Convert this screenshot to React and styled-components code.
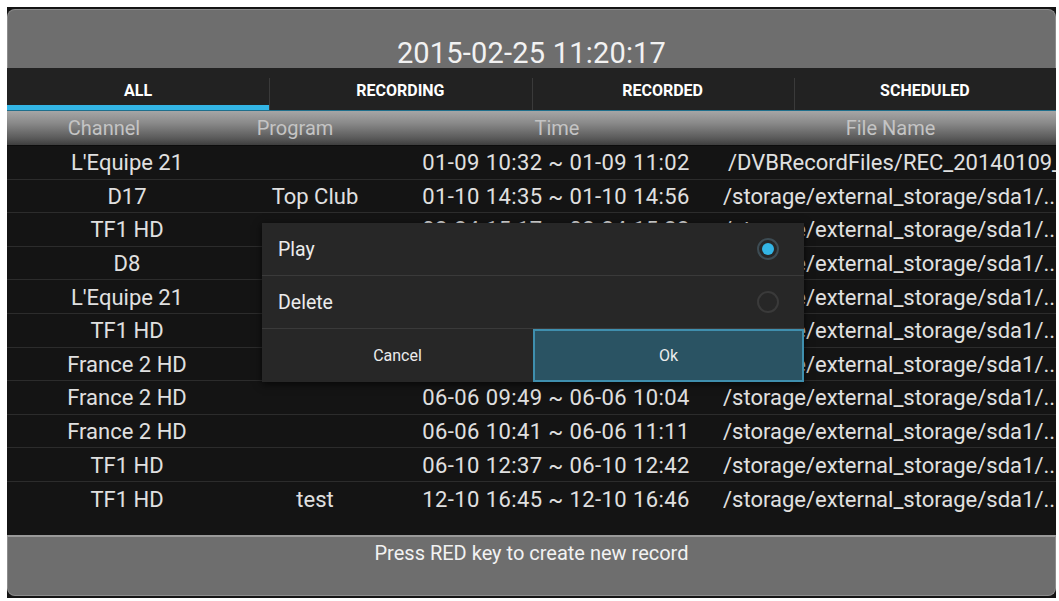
import React from "react";
import styled, { createGlobalStyle } from "styled-components";

const Global = createGlobalStyle`
  html, body { margin: 0; padding: 0; background: #ffffff; }
  body { font-family: Roboto, "Liberation Sans", Arial, sans-serif; }
  * { box-sizing: border-box; }
`;

const Screen = styled.div`
  position: relative;
  margin: 7px 0 0 7px;
  width: 1049px;
  height: 591px;
  background: #141414;
  padding-top: 2px;
  display: flex;
  flex-direction: column;
  overflow: hidden;
`;

const TopPanel = styled.div`
  height: 59px;
  flex: none;
  background: #6e6e6e;
  border: 1px solid #8c8c8c;
  border-bottom: none;
  border-radius: 8px 8px 0 0;
  padding-top: 31px;
  text-align: center;
  color: #f2f2f2;
  font-size: 29px;
  line-height: 24px;
  letter-spacing: 0.2px;
`;

const Tabs = styled.div`
  height: 43px;
  flex: none;
  background: #222222;
  display: grid;
  grid-template-columns: repeat(4, 1fr);
  border-bottom: 1px solid #1f6f8c;
`;

const Tab = styled.div`
  position: relative;
  display: flex;
  align-items: center;
  justify-content: center;
  padding-top: 3px;
  color: #ffffff;
  font-weight: 700;
  font-size: 16px;
  &::before {
    content: "";
    display: ${(p) => (p.$first ? "none" : "block")};
    position: absolute;
    left: 0;
    top: 10px;
    bottom: 0;
    width: 1px;
    background: #3a3a3a;
  }
  &::after {
    content: "";
    display: ${(p) => (p.$active ? "block" : "none")};
    position: absolute;
    left: 0;
    right: 0;
    bottom: 0;
    height: 5px;
    background: #33b5e5;
  }
`;

const HeadRow = styled.div`
  height: 35px;
  flex: none;
  display: grid;
  grid-template-columns: 194px 188px 336px 1fr;
  align-items: center;
  background: linear-gradient(#a6a6a6 0%, #8a8a8a 35%, #5a5a5a 80%, #3e3e3e 100%);
  border-bottom: 1px solid #0c0c0c;
  color: #c4c4c4;
  font-size: 20px;
`;

const HeadCell = styled.div`
  text-align: center;
  white-space: nowrap;
`;

const Rows = styled.div`
  display: flex;
  flex-direction: column;
`;

const Row = styled.div`
  height: 33.6px;
  display: grid;
  grid-template-columns: 240px 136px 340px 1fr;
  align-items: center;
  padding-top: 1px;
  border-bottom: 1px solid #2c2c2c;
  color: #e0e0e0;
  font-size: 22px;
  &:last-child { border-bottom: none; }
`;

const Cell = styled.div`
  text-align: ${(p) => (p.$left ? "left" : "center")};
  padding-left: ${(p) => p.$pl || 0}px;
  letter-spacing: ${(p) => p.$ls || 0}px;
  white-space: nowrap;
  overflow: hidden;
`;

const Spacer = styled.div`
  flex: 1;
`;

const Footer = styled.div`
  height: 61px;
  flex: none;
  background: #6e6e6e;
  border: 1px solid #8c8c8c;
  border-top: 2px solid #9a9a9a;
  border-radius: 0 0 8px 8px;
  color: #f2f2f2;
  font-size: 20px;
  text-align: center;
  padding-top: 4px;
  margin-bottom: 2px;
`;

const Dialog = styled.div`
  position: absolute;
  left: 255px;
  top: 216px;
  width: 542px;
  background: #272727;
  box-shadow: 0 2px 8px rgba(0, 0, 0, 0.7);
  display: flex;
  flex-direction: column;
`;

const Option = styled.div`
  height: 53px;
  display: flex;
  align-items: center;
  justify-content: space-between;
  padding: 0 25px 0 16px;
  border-bottom: 1px solid #3a3a3a;
  color: #ececec;
  font-size: 19.5px;
`;

const Radio = styled.span`
  width: 22px;
  height: 22px;
  border-radius: 50%;
  border: 2px solid ${(p) => (p.$on ? "#3d4c54" : "#3a3a3a")};
  display: flex;
  align-items: center;
  justify-content: center;
  &::after {
    content: "";
    width: 12px;
    height: 12px;
    border-radius: 50%;
    background: ${(p) => (p.$on ? "#33b5e5" : "transparent")};
  }
`;

const Buttons = styled.div`
  height: 53px;
  display: grid;
  grid-template-columns: 271px 1fr;
`;

const Button = styled.div`
  display: flex;
  align-items: center;
  justify-content: center;
  color: #ececec;
  font-size: 16px;
  background: ${(p) => (p.$focus ? "#2a5363" : "transparent")};
  border: ${(p) => (p.$focus ? "2px solid #3f8fae" : "none")};
`;

const tabs = ["ALL", "RECORDING", "RECORDED", "SCHEDULED"];

const data = [
  ["L'Equipe 21", "", "01-09 10:32 ~ 01-09 11:02", "/DVBRecordFiles/REC_20140109_", 5],
  ["D17", "Top Club", "01-10 14:35 ~ 01-10 14:56", "/storage/external_storage/sda1/..", 0],
  ["TF1 HD", "", "02-24 15:17 ~ 02-24 15:32", "/storage/external_storage/sda1/..", 0],
  ["D8", "", "03-05 20:50 ~ 03-05 21:20", "/storage/external_storage/sda1/..", 0],
  ["L'Equipe 21", "", "04-12 18:00 ~ 04-12 18:30", "/storage/external_storage/sda1/..", 0],
  ["TF1 HD", "", "05-20 13:00 ~ 05-20 13:45", "/storage/external_storage/sda1/..", 0],
  ["France 2 HD", "", "06-06 08:30 ~ 06-06 09:00", "/storage/external_storage/sda1/..", 0],
  ["France 2 HD", "", "06-06 09:49 ~ 06-06 10:04", "/storage/external_storage/sda1/..", 0],
  ["France 2 HD", "", "06-06 10:41 ~ 06-06 11:11", "/storage/external_storage/sda1/..", 0],
  ["TF1 HD", "", "06-10 12:37 ~ 06-10 12:42", "/storage/external_storage/sda1/..", 0],
  ["TF1 HD", "test", "12-10 16:45 ~ 12-10 16:46", "/storage/external_storage/sda1/..", 0],
];

export default function App() {
  return (
    <>
      <Global />
      <Screen>
        <TopPanel>2015-02-25 11:20:17</TopPanel>
        <Tabs>
          {tabs.map((t, i) => (
            <Tab key={t} $active={i === 0} $first={i === 0}>
              {t}
            </Tab>
          ))}
        </Tabs>
        <HeadRow>
          <HeadCell>Channel</HeadCell>
          <HeadCell>Program</HeadCell>
          <HeadCell>Time</HeadCell>
          <HeadCell>File Name</HeadCell>
        </HeadRow>
        <Rows>
          {data.map((r, i) => (
            <Row key={i}>
              <Cell>{r[0]}</Cell>
              <Cell>{r[1]}</Cell>
              <Cell $pl={6} $ls={0.4}>{r[2]}</Cell>
              <Cell $left $pl={r[4]}>{r[3]}</Cell>
            </Row>
          ))}
        </Rows>
        <Spacer />
        <Footer>Press RED key to create new record</Footer>
        <Dialog>
          <Option>
            Play
            <Radio $on />
          </Option>
          <Option>
            Delete
            <Radio />
          </Option>
          <Buttons>
            <Button>Cancel</Button>
            <Button $focus>Ok</Button>
          </Buttons>
        </Dialog>
      </Screen>
    </>
  );
}
